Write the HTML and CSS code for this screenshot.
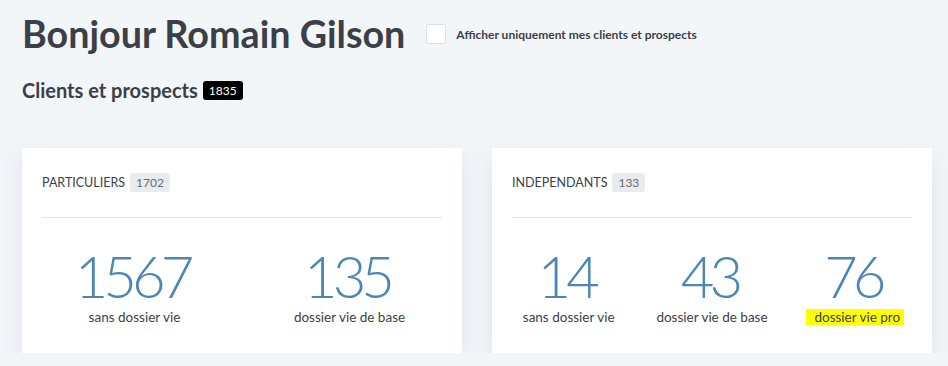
FILE: index.html
```html
<!DOCTYPE html>
<html lang="fr">
<head>
    <meta charset="UTF-8">
    <meta name="viewport" content="width=device-width, initial-scale=1.0">
    <title>Clients et prospects</title>
    <link rel="stylesheet" href="styles.css">
</head>
<body>
    <div class="page">
        <div class="top">
            <h1>Bonjour Romain Gilson</h1>
            <label class="filter">
                <span class="check"></span>
                Afficher uniquement mes clients et prospects
            </label>
        </div>
        <h2>Clients et prospects <span class="badge badge-dark">1835</span></h2>

        <div class="cards">
            <div class="card">
                <div class="card-title">PARTICULIERS <span class="badge badge-light">1702</span></div>
                <hr>
                <div class="stats">
                    <div class="stat">
                        <div class="number">1567</div>
                        <div class="label">sans dossier vie</div>
                    </div>
                    <div class="stat">
                        <div class="number">135</div>
                        <div class="label">dossier vie de base</div>
                    </div>
                </div>
            </div>
            <div class="card">
                <div class="card-title">INDEPENDANTS <span class="badge badge-light">133</span></div>
                <hr>
                <div class="stats">
                    <div class="stat">
                        <div class="number">14</div>
                        <div class="label">sans dossier vie</div>
                    </div>
                    <div class="stat">
                        <div class="number">43</div>
                        <div class="label">dossier vie de base</div>
                    </div>
                    <div class="stat">
                        <div class="number">76</div>
                        <div class="label"><mark>dossier vie pro</mark></div>
                    </div>
                </div>
            </div>
        </div>
    </div>
</body>
</html>
```

FILE: styles.css
```css
body {
    margin: 0;
    background: #f3f6f9;
    font-family: Lato, "Open Sans", sans-serif;
    color: #3b3f48;
}
.page {
    padding: 12px 16px 0 22px;
}
.top {
    display: flex;
    align-items: center;
}
h1 {
    font-size: 37.7px;
    font-weight: bold;
    margin: 0;
    line-height: 44px;
}
.filter {
    display: flex;
    align-items: center;
    margin-left: 21px;
    font-size: 12px;
    font-weight: bold;
}
.check {
    width: 18px;
    height: 18px;
    background: #fff;
    border: 1px solid #dde1e6;
    border-radius: 2px;
    margin-right: 10px;
}
h2 {
    font-size: 20px;
    font-weight: bold;
    margin: 22px 0 0;
    display: flex;
    align-items: center;
}
.badge {
    display: inline-block;
    font-size: 12px;
    font-weight: normal;
    padding: 2px 6px;
    border-radius: 3px;
    margin-left: 5px;
}
.badge-dark {
    background: #000;
    color: #fff;
}
.badge-light {
    background: #e9ebee;
    color: #6a6e75;
}
.cards {
    display: grid;
    grid-template-columns: 1fr 1fr;
    gap: 30px;
    margin-top: 46px;
}
.card {
    background: #fff;
    padding: 25px 20px 27px;
    box-shadow: 0 8px 22px rgba(40, 60, 90, 0.1);
}
.card-title {
    font-size: 12.5px;
    display: flex;
    align-items: center;
}
hr {
    border: none;
    border-top: 1px solid #dfe2e6;
    margin: 25px 0 0;
}
.stats {
    display: flex;
    margin: 29px -15px 0;
}
.stat {
    flex: 1;
    text-align: center;
}
.number {
    font-size: 58px;
    font-weight: 300;
    color: #4a86b8;
    line-height: 58px;
    letter-spacing: -5px;
    text-indent: -5px;
}
.label {
    font-size: 13.5px;
    line-height: 18px;
    margin-top: 3px;
}
mark {
    background: #ffff00;
    color: #3b3f48;
    padding: 0 4px 0 8px;
}
```
